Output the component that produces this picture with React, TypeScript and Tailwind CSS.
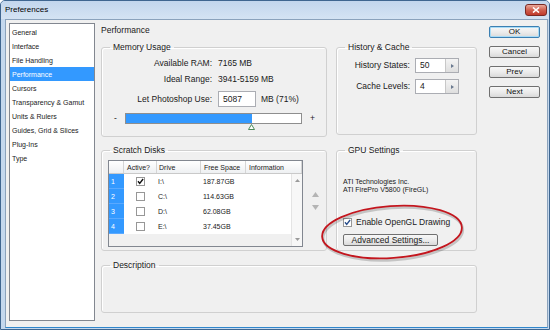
import React from "react";

function Check({ checked = false, color = "#111" }: { checked?: boolean; color?: string }) {
  return (
    <svg width="9" height="9" viewBox="0 0 9 9" className="shrink-0 block">
      <rect x="0.5" y="0.5" width="8" height="8" fill="#fff" stroke="#979797" />
      {checked && (
        <path d="M2 4.3 L3.7 6.4 L7.1 2" stroke={color} strokeWidth="1.4" fill="none" />
      )}
    </svg>
  );
}

function Group({
  title,
  className,
  children,
}: {
  title: string;
  className: string;
  children?: React.ReactNode;
}) {
  return (
    <fieldset
      className={
        "border border-[#d0d0d0] rounded-[3px] shadow-[inset_1px_1px_0_#ffffff] min-w-0 shrink-0 " +
        className
      }
    >
      <legend className="ml-[8px] px-[3px] text-[8.5px] leading-[10px] text-[#1a1a1a]">
        {title}
      </legend>
      {children}
    </fieldset>
  );
}

function Btn({ label, def = false }: { label: string; def?: boolean }) {
  return (
    <div
      className={
        "h-[12px] w-[51px] flex items-center justify-center rounded-[2px] border text-[8px] leading-none text-[#111] bg-gradient-to-b from-[#f7f7f7] via-[#ececec] to-[#dadada] " +
        (def ? "border-[#3c7fb1] shadow-[inset_0_0_0_1px_#a8dcf7]" : "border-[#707070]")
      }
    >
      {label}
    </div>
  );
}

function Spin({ value }: { value: string }) {
  return (
    <div className="ml-[5px] w-[44px] h-[15px] border border-[#abadb3] bg-white flex">
      <div className="flex-1 flex items-center pl-[4px] text-[8.5px]">{value}</div>
      <div className="w-[13px] h-full border-l border-[#c8c8c8] bg-gradient-to-b from-[#f4f4f4] to-[#dedede] flex items-center justify-center">
        <svg width="3" height="4" viewBox="0 0 3 4">
          <path d="M0 0 L3 2 L0 4 Z" fill="#6a7a90" />
        </svg>
      </div>
    </div>
  );
}

const rows = [
  { n: "1", on: true, drive: "I:\\", free: "187.87GB" },
  { n: "2", on: false, drive: "C:\\", free: "114.63GB" },
  { n: "3", on: false, drive: "D:\\", free: "62.08GB" },
  { n: "4", on: false, drive: "E:\\", free: "37.45GB" },
];

const items = [
  "General",
  "Interface",
  "File Handling",
  "Performance",
  "Cursors",
  "Transparency & Gamut",
  "Units & Rulers",
  "Guides, Grid & Slices",
  "Plug-Ins",
  "Type",
];

export default function App() {
  return (
    <div className="relative w-[550px] h-[330px] overflow-hidden bg-[#c4d8ee] border border-[#3f6690] rounded-t-[5px] flex flex-col font-['Liberation_Sans',Arial,sans-serif] text-[#1a1a1a]">
      {/* title bar */}
      <div className="h-[18px] shrink-0 flex items-center justify-between pl-[4px] pr-[2px] bg-gradient-to-b from-[#c2d6ed] to-[#d4e3f3]">
        <span className="text-[8px] leading-none text-black">Preferences</span>
        <div className="w-[22px] h-[12px] rounded-[3px] border border-[#7a2a24] bg-gradient-to-b from-[#e9a99c] via-[#d0604f] to-[#c0392b] flex items-center justify-center">
          <svg width="8" height="6" viewBox="0 0 8 6">
            <path d="M1 0.5 L7 5.5 M7 0.5 L1 5.5" stroke="#fff" strokeWidth="1.6" />
          </svg>
        </div>
      </div>

      {/* body */}
      <div className="flex-1 ml-[4px] mr-[1px] mb-[1px] border border-[#8aa2bc] border-b-[#2f86cc] bg-[#f0f0f0] flex">
        {/* category list */}
        <div className="ml-[3px] mt-[3px] mb-[6px] w-[86px] border border-[#828790] bg-white pt-[1px] shrink-0">
          {items.map((it) => (
            <div
              key={it}
              className={
                "h-[14px] flex items-center pl-[2px] text-[7px] leading-none whitespace-nowrap " +
                (it === "Performance" ? "bg-[#3399ff] text-white" : "text-[#1a1a1a]")
              }
            >
              {it}
            </div>
          ))}
        </div>

        {/* middle */}
        <div className="ml-[6px] w-[376px] pt-[5px] flex flex-col shrink-0">
          <div className="h-[10px] text-[8.5px] leading-[10px]">Performance</div>

          <div className="mt-[7px] flex items-start gap-[9px]">
            <Group title="Memory Usage" className="w-[226px] h-[95px]">
              <div className="mt-[3px] flex items-center h-[16px] text-[8.5px]">
                <span className="w-[110px] text-right">Available RAM:</span>
                <span className="ml-[6px]">7165 MB</span>
              </div>
              <div className="flex items-center h-[16px] text-[8.5px]">
                <span className="w-[110px] text-right">Ideal Range:</span>
                <span className="ml-[6px]">3941-5159 MB</span>
              </div>
              <div className="mt-[4px] flex items-center h-[16px] text-[8.5px]">
                <span className="w-[110px] text-right">Let Photoshop Use:</span>
                <div className="ml-[6px] w-[38px] h-[16px] border border-[#abadb3] bg-white flex items-center pl-[4px]">
                  5087
                </div>
                <span className="ml-[5px]">MB (71%)</span>
              </div>
              <div className="mt-[6px] flex items-center h-[11px] text-[8.5px]">
                <span className="w-[23px] pl-[12px]">-</span>
                <div className="relative w-[177px] h-[11px] border border-[#8e8e8e] bg-white">
                  <div className="w-[126px] h-full bg-[#3399ff]" />
                  <svg
                    width="7"
                    height="6"
                    viewBox="0 0 7 6"
                    className="absolute left-[122px] top-[10px]"
                  >
                    <path d="M3.5 0.5 L6.5 5.5 L0.5 5.5 Z" fill="#fff" stroke="#4d8a5a" />
                  </svg>
                </div>
                <span className="ml-[8px]">+</span>
              </div>
            </Group>

            <Group title="History & Cache" className="w-[141px] h-[93px]">
              <div className="mt-[6px] flex items-center h-[15px] text-[8.5px]">
                <span className="w-[73px] text-right">History States:</span>
                <Spin value="50" />
              </div>
              <div className="mt-[6px] flex items-center h-[15px] text-[8.5px]">
                <span className="w-[73px] text-right">Cache Levels:</span>
                <Spin value="4" />
              </div>
            </Group>
          </div>

          <div className="mt-[8px] flex items-start gap-[9px]">
            <Group title="Scratch Disks" className="w-[226px] h-[106px]">
              <div className="mt-[5px] ml-[6px] flex items-start">
                <div className="w-[195px] h-[87px] border border-[#828790] bg-[#f0f0f0] flex flex-col text-[7px] leading-none">
                  <div className="h-[13px] shrink-0 flex bg-gradient-to-b from-white to-[#eef0f2] border-b border-[#c9c9c9]">
                    <div className="w-[15px] border-r border-[#d5d5d5]" />
                    <div className="w-[33px] border-r border-[#d5d5d5] flex items-center pl-[3px]">Active?</div>
                    <div className="w-[44px] border-r border-[#d5d5d5] flex items-center pl-[2px]">Drive</div>
                    <div className="w-[45px] border-r border-[#d5d5d5] flex items-center pl-[3px]">Free Space</div>
                    <div className="flex-1 border-r border-[#d5d5d5] flex items-center pl-[3px]">Information</div>
                  </div>
                  <div className="flex-1 flex">
                    <div className="w-[182px] flex flex-col">
                      {rows.map((r) => (
                        <div key={r.n} className="h-[15px] flex">
                          <div className="w-[15px] bg-[#3399ff] text-white flex items-center pl-[2px] border-b border-[#5aa9ff]">
                            {r.n}
                          </div>
                          <div className="flex-1 bg-white flex">
                            <div className="w-[33px] flex items-center justify-center">
                              <Check checked={r.on} />
                            </div>
                            <div className="w-[44px] flex items-center pl-[1px]">{r.drive}</div>
                            <div className="w-[45px] flex items-center pl-[2px]">{r.free}</div>
                          </div>
                        </div>
                      ))}
                    </div>
                    <div className="w-[11px] bg-[#f7f7f7] border-l border-[#e4e4e4] flex flex-col justify-between items-center py-[5px]">
                      <svg width="5" height="3" viewBox="0 0 5 3">
                        <path d="M0 3 L2.5 0 L5 3 Z" fill="#9a9a9a" />
                      </svg>
                      <svg width="5" height="3" viewBox="0 0 5 3">
                        <path d="M0 0 L2.5 3 L5 0 Z" fill="#9a9a9a" />
                      </svg>
                    </div>
                  </div>
                </div>
                <div className="ml-[9px] pt-[32px] flex flex-col items-center gap-[8px]">
                  <svg width="7" height="5" viewBox="0 0 7 5">
                    <path d="M0 5 L3.5 0 L7 5 Z" fill="#b4b4b4" />
                  </svg>
                  <svg width="7" height="5" viewBox="0 0 7 5">
                    <path d="M0 0 L3.5 5 L7 0 Z" fill="#b4b4b4" />
                  </svg>
                </div>
              </div>
            </Group>

            <Group title="GPU Settings" className="w-[141px] h-[106px]">
              <div className="pl-[6px] mt-[23px] text-[7px] leading-[8px] whitespace-nowrap">
                <div>ATI Technologies Inc.</div>
                <div>ATI FirePro V5800 (FireGL)</div>
              </div>
              <div className="pl-[6px] mt-[23px] flex items-center h-[10px]">
                <Check checked color="#2b4f8c" />
                <span className="ml-[4px] text-[8.5px] leading-none whitespace-nowrap">Enable OpenGL Drawing</span>
              </div>
              <div className="ml-[6px] mt-[7px] w-[95px] h-[12px] flex items-center justify-center rounded-[2px] border border-[#707070] bg-gradient-to-b from-[#f7f7f7] via-[#ececec] to-[#dadada] text-[8.5px] leading-none whitespace-nowrap">
                Advanced Settings...
              </div>
            </Group>
          </div>

          <Group title="Description" className="mt-[9px] w-[376px] h-[53px]" />
        </div>

        {/* buttons */}
        <div className="ml-[12px] pt-[6px] flex flex-col gap-[8px] shrink-0">
          <Btn label="OK" def />
          <Btn label="Cancel" />
          <Btn label="Prev" />
          <Btn label="Next" />
        </div>
      </div>

      {/* red annotation ellipse */}
      <svg
        width="152"
        height="64"
        viewBox="0 0 152 64"
        className="absolute left-[316px] top-[200px] pointer-events-none"
      >
        <ellipse
          cx="76"
          cy="33"
          rx="70"
          ry="26"
          transform="rotate(-4 76 33)"
          fill="none"
          stroke="#000"
          strokeOpacity="0.18"
          strokeWidth="2.5"
        />
        <ellipse
          cx="75"
          cy="31"
          rx="70"
          ry="26"
          transform="rotate(-4 75 31)"
          fill="none"
          stroke="#c3161e"
          strokeWidth="1.8"
        />
      </svg>
    </div>
  );
}
